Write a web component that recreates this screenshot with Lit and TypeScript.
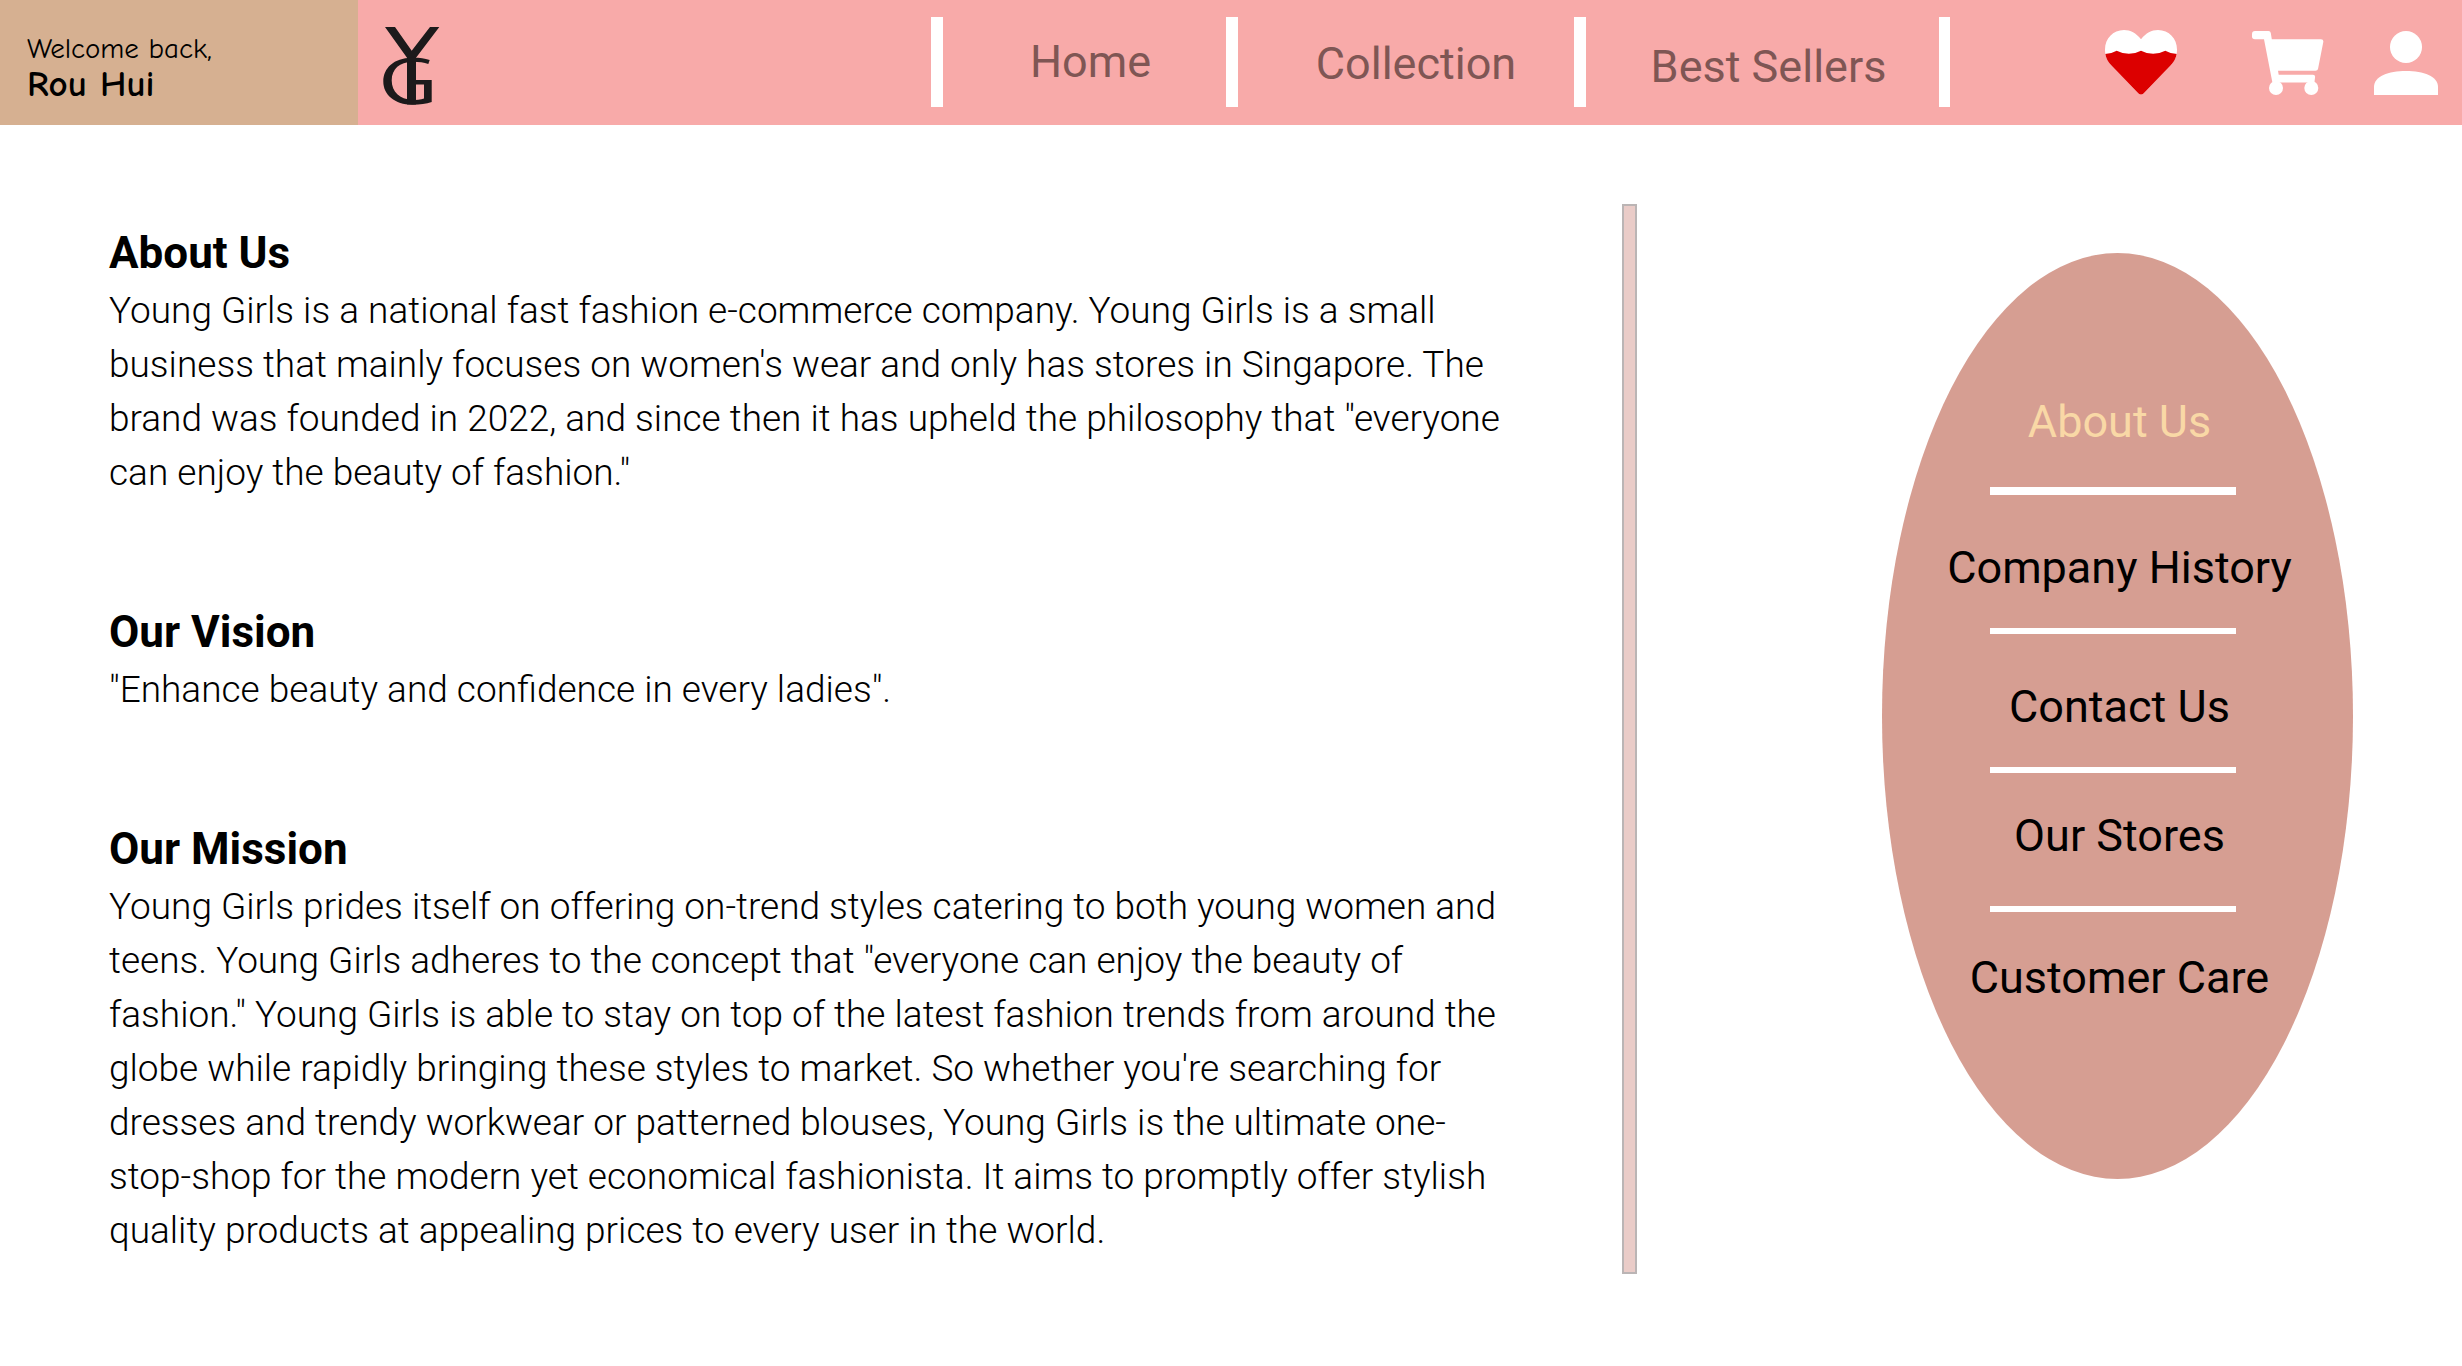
import { LitElement, html, css, svg } from "lit";
import { customElement } from "lit/decorators.js";
import { classMap } from "lit/directives/class-map.js";

const navLinks = [
  { label: "Home", drop: "" },
  { label: "Collection", drop: "drop-small" },
  { label: "Best Sellers", drop: "drop-large" },
];

const sections = [
  {
    title: "About Us",
    body: `Young Girls is a national fast fashion e-commerce company. Young Girls is a small business that mainly focuses on women's wear and only has stores in Singapore. The brand was founded in 2022, and since then it has upheld the philosophy that "everyone can enjoy the beauty of fashion."`,
  },
  {
    title: "Our Vision",
    body: `"Enhance beauty and confidence in every ladies".`,
  },
  {
    title: "Our Mission",
    body: `Young Girls prides itself on offering on-trend styles catering to both young women and teens. Young Girls adheres to the concept that "everyone can enjoy the beauty of fashion." Young Girls is able to stay on top of the latest fashion trends from around the globe while rapidly bringing these styles to market. So whether you're searching for dresses and trendy workwear or patterned blouses, Young Girls is the ultimate one-stop-shop for the modern yet economical fashionista. It aims to promptly offer stylish quality products at appealing prices to every user in the world.`,
  },
];

const sideLinks = [
  { label: "About Us", place: "first" },
  { label: "Company History", place: "low" },
  { label: "Contact Us", place: "low" },
  { label: "Our Stores", place: "high" },
  { label: "Customer Care", place: "last" },
];

const logo = svg`
  <path d="M3 1H13L29.7 24.7L48 1H57.3L34 31.7V78.5H25V31.7Z" />
  <path d="M47.7 34C42 32 36 31.5 29.5 31.7C12 32 1.3 42 1.3 55.5C1.3 69 13 78.5 30 78.7C37 78.8 44 78 49.7 76V54H34V58.5H42V72.5C39 73.8 34 74 30 74C18 73 9.7 66 9.7 54.5C9.7 43 18 36 30 35.8C36 35.7 42 36.5 46.3 38Z" />`;

const heart =
  "M36 9.3C31 3 25.5 0 19 0C8 0 0 8.5 0 19.5C0 26 2 31 6.5 35.5L33.5 63.5Q36 65.5 38.5 63.5L65.5 35.5C70 31 72 26 72 19.5C72 8.5 64 0 53 0C46.5 0 41 3 36 9.3Z";

@customElement("app-header")
export class AppHeader extends LitElement {
  static styles = css`
    :host {
      display: grid;
      grid-template-columns: 358fr 573fr 1019fr 512fr;
      height: 125px;
      background: #f8aaa9;
      font-family: Roboto, "Liberation Sans", sans-serif;
    }
    .welcome {
      display: flex;
      flex-direction: column;
      padding: 32px 0 0 27px;
      background: #d6b091;
      color: #000;
      font-family: "Comic Sans MS", "Comic Neue", Lato, sans-serif;
      white-space: nowrap;
    }
    .greeting {
      font-size: 29px;
      line-height: 34px;
    }
    .user {
      font-size: 37px;
      line-height: 36px;
      font-weight: 700;
    }
    .brand {
      display: flex;
      align-items: center;
      padding: 6px 24px 0;
    }
    .logo {
      display: block;
      fill: #1c1a1b;
    }
    .nav {
      display: grid;
      grid-template-columns: 295fr 348fr 365fr;
      align-items: center;
      height: 90px;
      margin-top: 17px;
      border-right: 11px solid #fff;
    }
    .cell {
      display: flex;
      align-items: center;
      justify-content: center;
      box-sizing: border-box;
      height: 90px;
      border-left: 12px solid #fff;
      padding-left: 12px;
    }
    .link {
      color: #7f5654;
      font-size: 45px;
      line-height: 54px;
      text-decoration: none;
      white-space: nowrap;
    }
    .drop-small {
      padding: 4px 0 0 8px;
    }
    .drop-large {
      padding-top: 10px;
    }
    .actions {
      display: flex;
      align-items: center;
      justify-content: flex-end;
      gap: 50px;
      padding-right: 24px;
    }
    .action {
      padding: 0;
      border: 0;
      background: none;
      color: #fff;
      cursor: pointer;
    }
    .wishlist {
      margin-right: 25px;
    }
    .icon {
      display: block;
      fill: currentColor;
    }
    .fill {
      fill: #dc0000;
    }
  `;

  render() {
    return html`
      <div class="welcome">
        <span class="greeting">Welcome back,</span>
        <span class="user">Rou Hui</span>
      </div>
      <a class="brand" href="#" aria-label="Young Girls">
        <svg class="logo" width="60" height="80" viewBox="0 0 60 80" aria-hidden="true">${logo}</svg>
      </a>
      <nav class="nav">
        ${navLinks.map(
          ({ label, drop }) => html`
            <div class="cell">
              <a class="link ${drop}" href="#">${label}</a>
            </div>
          `,
        )}
      </nav>
      <div class="actions">
        <button class="action wishlist" aria-label="Wishlist">
          <svg class="icon" width="72" height="65" viewBox="0 0 72 65">
            <clipPath id="heart"><path d=${heart} /></clipPath>
            <path d=${heart} />
            <path
              class="fill"
              clip-path="url(#heart)"
              d="M0 24Q7 23.5 11.7 20.7Q24 27 36 20.7Q48 27 60.3 20.7Q65 23.5 72 24V65H0Z"
            />
          </svg>
        </button>
        <button class="action" aria-label="Cart">
          <svg class="icon" width="72" height="64" viewBox="0 0 72 64">
            <path
              d="M3 0H16.5Q18.5 0 18.8 2L19.8 8.3H69Q71.7 8.3 71.3 11L66 38Q65.6 39.7 63.5 39.7H26L26.7 43.7H61Q63.3 43.7 63.1 46L62.4 51.6H20.4L12 8.3H3Q0 8.3 0 5.5V3Q0 0 3 0Z"
            />
            <circle cx="24" cy="57" r="7" />
            <circle cx="59.3" cy="57" r="7" />
          </svg>
        </button>
        <button class="action" aria-label="Account">
          <svg class="icon" width="64" height="64" viewBox="0 0 64 64">
            <circle cx="32" cy="16" r="16" />
            <path d="M0 64V56C0 45.4 14.3 40 32 40S64 45.4 64 56V64Z" />
          </svg>
        </button>
      </div>
    `;
  }
}

@customElement("side-menu")
export class SideMenu extends LitElement {
  static styles = css`
    :host {
      display: block;
      font-family: Roboto, "Liberation Sans", sans-serif;
    }
    .oval {
      box-sizing: border-box;
      height: 926px;
      padding-top: 142px;
      border-radius: 50%;
      background: #d69e92;
    }
    .list {
      display: flex;
      flex-direction: column;
      margin: 0;
      padding: 0;
      list-style: none;
    }
    .item {
      display: flex;
      flex-direction: column;
      align-items: center;
      box-sizing: border-box;
      height: 139px;
    }
    .item::after {
      content: "";
      width: 246px;
      height: 6px;
      margin-right: 9px;
      background: #fff;
    }
    .link {
      display: flex;
      flex: 1;
      align-items: center;
      padding-left: 4px;
      color: #000;
      font-size: 45px;
      line-height: 54px;
      text-decoration: none;
      white-space: nowrap;
    }
    .current {
      align-items: flex-start;
      color: #f9d8a6;
    }
    .first {
      height: 100px;
    }
    .first::after {
      height: 8px;
    }
    .low {
      padding-top: 12px;
    }
    .high .link {
      padding-bottom: 8px;
    }
    .last {
      height: 132px;
    }
    .last::after {
      display: none;
    }
  `;

  render() {
    return html`
      <nav class="oval">
        <ul class="list">
          ${sideLinks.map(
            ({ label, place }, i) => html`
              <li class="item ${place}">
                <a class=${classMap({ link: true, current: i === 0 })} href="#">${label}</a>
              </li>
            `,
          )}
        </ul>
      </nav>
    `;
  }
}

@customElement("app-root")
export class AppRoot extends LitElement {
  static styles = css`
    :host {
      display: block;
      min-height: 100vh;
      background: #fff;
      color: #000;
      font-family: Roboto, "Liberation Sans", sans-serif;
    }
    .page {
      display: grid;
      grid-template-columns: 1622fr 15px 825fr;
    }
    .article {
      padding: 101px 110px 0 109px;
    }
    .section {
      margin-bottom: 105px;
    }
    .section:last-child {
      margin-bottom: 0;
    }
    .title {
      margin: 0 0 4px;
      font-size: 44px;
      line-height: 54px;
      font-weight: 700;
    }
    .body {
      margin: 0;
      font-size: 37px;
      line-height: 54px;
      font-weight: 300;
    }
    .divider {
      box-sizing: border-box;
      height: 1070px;
      margin-top: 79px;
      border: 2px solid #bbb5b5;
      background: #eaccc8;
    }
    .aside {
      padding: 128px 109px 0 245px;
    }
  `;

  render() {
    return html`
      <app-header></app-header>
      <main class="page">
        <article class="article">
          ${sections.map(
            ({ title, body }) => html`
              <section class="section">
                <h2 class="title">${title}</h2>
                <p class="body">${body}</p>
              </section>
            `,
          )}
        </article>
        <div class="divider"></div>
        <aside class="aside"><side-menu></side-menu></aside>
      </main>
    `;
  }
}
